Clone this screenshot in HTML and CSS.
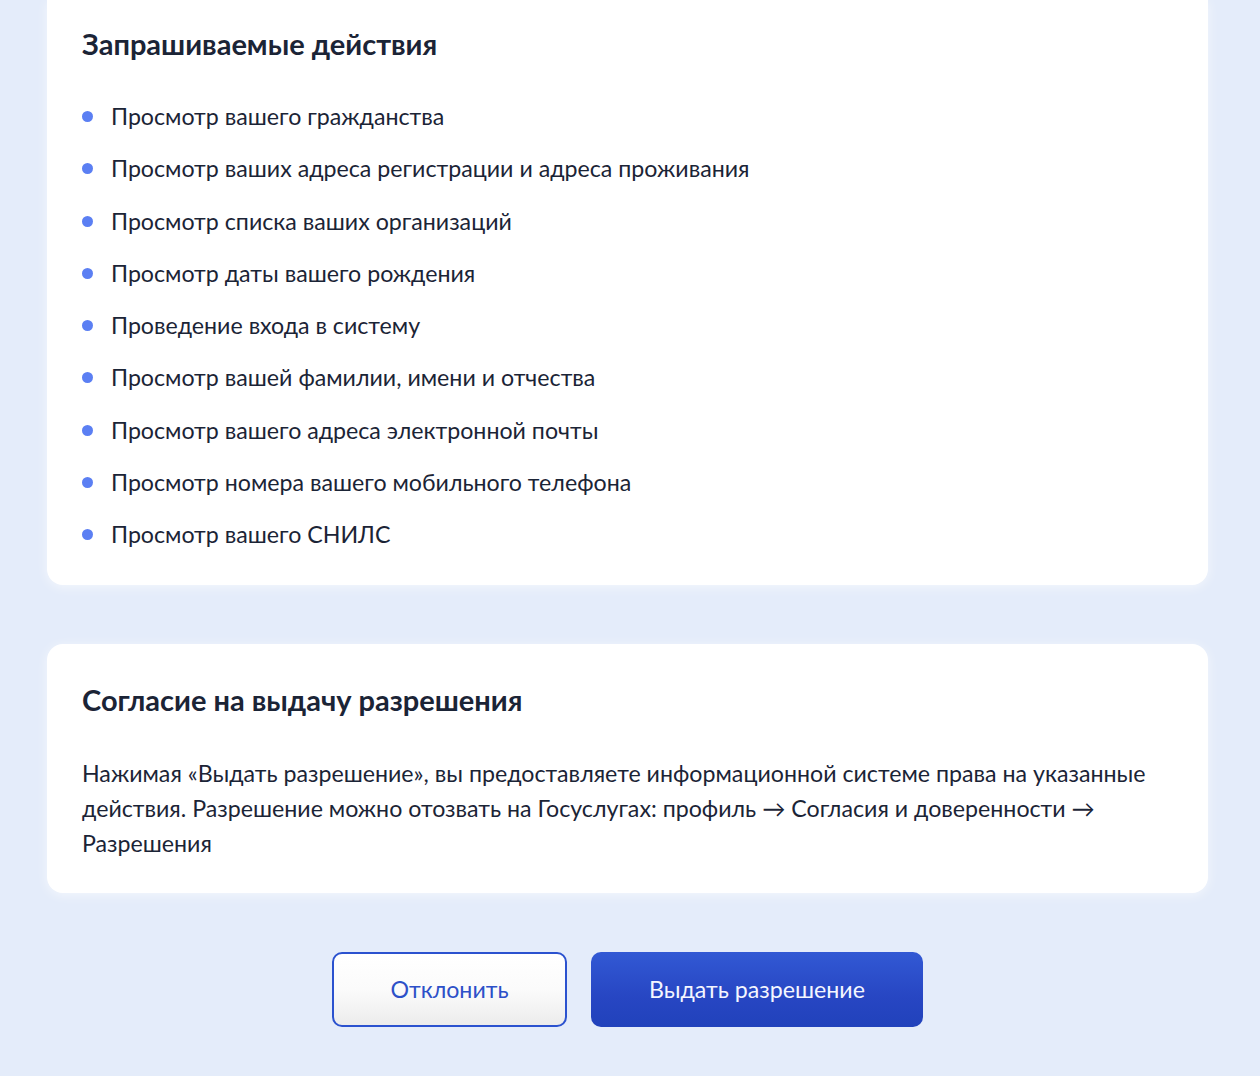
FILE: index.html
```html
<!DOCTYPE html>
<html lang="ru">
<head>
<meta charset="utf-8">
<title>Разрешение</title>
<link rel="stylesheet" href="styles.css">
</head>
<body>
<main class="page">
  <section class="card card-top">
    <h2 class="card-title">Запрашиваемые действия</h2>
    <ul class="actions">
      <li>Просмотр вашего гражданства</li>
      <li>Просмотр ваших адреса регистрации и адреса проживания</li>
      <li>Просмотр списка ваших организаций</li>
      <li>Просмотр даты вашего рождения</li>
      <li>Проведение входа в систему</li>
      <li>Просмотр вашей фамилии, имени и отчества</li>
      <li>Просмотр вашего адреса электронной почты</li>
      <li>Просмотр номера вашего мобильного телефона</li>
      <li>Просмотр вашего СНИЛС</li>
    </ul>
  </section>
  <section class="card card-consent">
    <h2 class="card-title">Согласие на выдачу разрешения</h2>
    <p class="consent-text">Нажимая «Выдать разрешение», вы предоставляете информационной системе права на указанные действия. Разрешение можно отозвать на Госуслугах: профиль → Согласия и доверенности → Разрешения</p>
  </section>
  <div class="buttons">
    <button class="btn btn-decline" type="button">Отклонить</button>
    <button class="btn btn-accept" type="button">Выдать разрешение</button>
  </div>
</main>
</body>
</html>
```

FILE: styles.css
```css
html, body {
  margin: 0;
  padding: 0;
  background: #e4ecfa;
}
body {
  font-family: Lato, "Noto Sans", sans-serif;
  color: #0b1f33;
  height: 1076px;
  overflow: hidden;
}
.page {
  width: 1161px;
  margin: 0 0 0 47px;
  display: flex;
  flex-direction: column;
}
.card {
  background: #ffffff;
  border-radius: 16px;
  padding: 40px 35px 32px;
  box-shadow: 0 2px 12px rgba(255, 255, 255, 0.6);
}
.card-top {
  border-top-left-radius: 0;
  border-top-right-radius: 0;
  padding-top: 28px;
  padding-bottom: 35px;
}
.card-title {
  margin: 0;
  font-size: 29px;
  line-height: 32px;
  font-weight: 700;
  color: #1b2436;
}
.actions {
  list-style: none;
  margin: 40px 0 0;
  padding: 0;
  display: flex;
  flex-direction: column;
  gap: 20.25px;
}
.actions li {
  position: relative;
  padding-left: 29px;
  font-size: 23.2px;
  line-height: 32px;
  color: #1b2436;
}
.actions li::before {
  content: "";
  position: absolute;
  left: 0;
  top: 11px;
  width: 11px;
  height: 11px;
  border-radius: 50%;
  background: #5b7ff3;
}
.card-consent {
  margin-top: 59px;
}
.consent-text {
  margin: 40px 0 0;
  font-size: 23.2px;
  line-height: 35px;
  color: #1b2436;
}
.buttons {
  margin-top: 59px;
  display: flex;
  justify-content: center;
  gap: 24px;
}
.btn {
  height: 75px;
  border-radius: 10px;
  font-family: Lato, "Noto Sans", sans-serif;
  font-size: 23.2px;
  padding-bottom: 2px;
  cursor: pointer;
}
.btn-decline {
  width: 235px;
  border: 2px solid #2b52cf;
  background: linear-gradient(180deg, #ffffff 0%, #fbfbfb 50%, #ececec 100%);
  color: #2d50c8;
}
.btn-accept {
  width: 332px;
  border: none;
  background: linear-gradient(180deg, #3259d4 0%, #2746c3 60%, #2142bb 100%);
  color: #f4f6ff;
}
```
